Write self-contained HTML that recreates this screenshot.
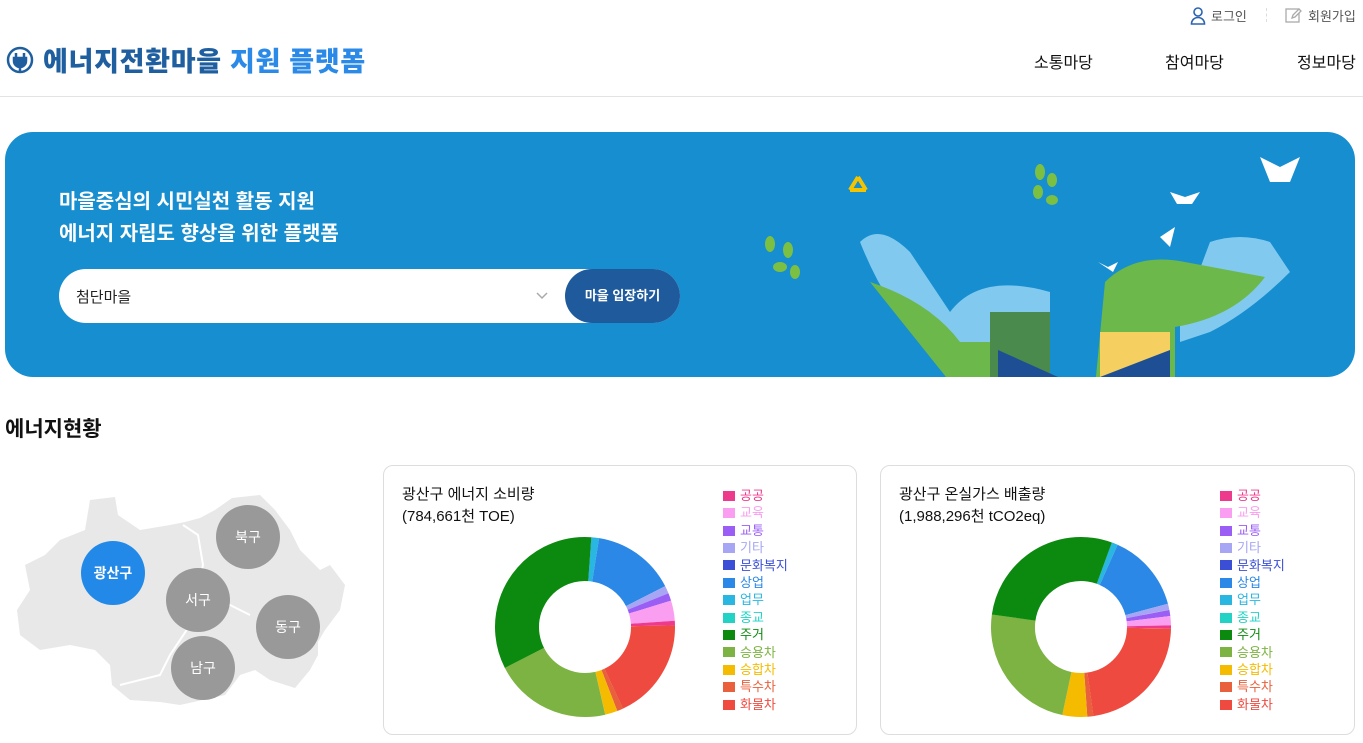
<!DOCTYPE html>
<html><head><meta charset="utf-8"><style>
*{margin:0;padding:0;box-sizing:border-box}
body{width:1363px;height:743px;overflow:hidden;background:#fff;font-family:"Liberation Sans","Noto Sans CJK KR",sans-serif;color:#111;position:relative}
.abs{position:absolute}
.top{top:6px;font-size:13px;color:#555}
.nav{top:49px;font-size:16px;color:#111}
.legend{position:absolute;left:0;top:0;font-size:13px;line-height:17.4px}
.legend div{display:flex;align-items:center;white-space:nowrap}
.legend i{display:inline-block;width:12px;height:10px;margin-right:5px}
.card{position:absolute;top:465px;height:270px;border:1px solid #ddd;border-radius:10px;background:#fff}
.card h3{position:absolute;left:18px;top:18px;font-size:15px;font-weight:normal;line-height:22px;color:#111}
</style></head><body>
<!-- header -->
<div class="abs top" style="left:1190px;display:flex;align-items:center;gap:5px">
<svg width="16" height="18" viewBox="0 0 16 18"><circle cx="8" cy="5" r="4" fill="none" stroke="#2a64b0" stroke-width="1.6"/><path d="M1.5 17c0-4 3-6.5 6.5-6.5s6.5 2.5 6.5 6.5z" fill="none" stroke="#2a64b0" stroke-width="1.6"/></svg>로그인</div>
<div class="abs" style="left:1266px;top:8px;width:1px;height:14px;border-left:1px dashed #ddd"></div>
<div class="abs top" style="left:1285px;display:flex;align-items:center;gap:6px">
<svg width="17" height="17" viewBox="0 0 17 17"><rect x="1" y="2" width="13" height="13" fill="none" stroke="#aaa" stroke-width="1.3"/><path d="M7 11l1-3 6-6 2 2-6 6z" fill="#fff" stroke="#aaa" stroke-width="1.3"/></svg>회원가입</div>
<div class="abs" style="left:6px;top:40px;display:flex;align-items:center">
<svg width="28" height="28" viewBox="0 0 28 28"><circle cx="14" cy="14" r="12" fill="none" stroke="#1f5fa0" stroke-width="2.5"/><path d="M10 7v5M18 7v5M8 12h12v3a6 6 0 0 1-12 0z M14 21v6" stroke="#1f5fa0" stroke-width="2.5" fill="#1f5fa0"/></svg>
<span style="margin-left:9px;font-size:27px;font-weight:900;color:#1f5fa0;letter-spacing:0.7px;white-space:nowrap">에너지전환마을 <span style="color:#2b8ae8">지원 플랫폼</span></span></div>
<div class="abs nav" style="left:1034px">소통마당</div>
<div class="abs nav" style="left:1165px">참여마당</div>
<div class="abs nav" style="left:1297px">정보마당</div>
<div class="abs" style="left:0;top:96px;width:1363px;height:1px;background:#e3e3e3"></div>

<!-- hero -->
<div class="abs" style="left:5px;top:132px;width:1350px;height:245px;border-radius:28px;background:#168ecf;overflow:hidden">
<div class="abs" style="left:54px;top:54px;color:#fff;font-size:20px;font-weight:bold;line-height:32px">마을중심의 시민실천 활동 지원<br>에너지 자립도 향상을 위한 플랫폼</div>
<div class="abs" style="left:54px;top:137px;width:621px;height:54px;border-radius:27px;background:#fff">
<span class="abs" style="left:17px;top:17px;font-size:15px;color:#222">첨단마을</span>
<svg class="abs" style="left:476px;top:22px" width="14" height="10" viewBox="0 0 14 10"><path d="M2 2l5 5 5-5" fill="none" stroke="#aaa" stroke-width="1.5"/></svg>
<div class="abs" style="right:0;top:0;width:115px;height:54px;border-radius:27px;background:#1f5a9c;color:#fff;font-size:13px;font-weight:bold;text-align:center;line-height:54px">마을 입장하기</div>
</div>
<svg class="abs" style="left:735px;top:0" width="615" height="245" viewBox="0 0 615 245">
<path d="M118 45l-8 13M118 45l8 13M110 58h16" stroke="#f5c400" stroke-width="4" fill="none"/>
<g fill="#7bc043"><ellipse cx="30" cy="112" rx="5" ry="8"/><ellipse cx="48" cy="118" rx="5" ry="8"/><ellipse cx="40" cy="135" rx="7" ry="5"/><ellipse cx="55" cy="140" rx="5" ry="7"/><ellipse cx="300" cy="40" rx="5" ry="8"/><ellipse cx="312" cy="48" rx="5" ry="7"/><ellipse cx="298" cy="60" rx="5" ry="7"/><ellipse cx="312" cy="68" rx="6" ry="5"/></g>
<g fill="#fff"><path d="M520 25l20 10 20-10-10 25-20 0z"/><path d="M430 60l15 5 15-5-8 12h-15z"/><path d="M420 105l15-10-5 20z"/><path d="M358 130l10 5 10-5-5 10z"/></g>
<path d="M120 110q20-20 50 10l40 60q30-40 100-20v120h-80l-10-50q-60-20-100-120z" fill="#82c9ef"/>
<path d="M130 150q60 20 90 60h80v65h-70z" fill="#6cb84a"/>
<path d="M250 180h60v65h-60z" fill="#4b8a4d"/>
<path d="M470 110q30-10 60 0l20 30q-40 40-80 60l-30 10v-20z" fill="#82c9ef"/>
<path d="M365 150q30-30 80-20l80 15q-30 40-90 50v60h-80z" fill="#6cb84a"/>
<path d="M360 200h70v45h-70z" fill="#f5d061"/>
<path d="M258 218l60 27h-60z" fill="#1e4f95"/><path d="M360 245l70-27v27z" fill="#1e4f95"/>
</svg>
</div>

<div class="abs" style="left:5px;top:413px;font-size:21px;font-weight:bold">에너지현황</div>

<!-- map -->
<svg class="abs" style="left:0;top:470px" width="370" height="260" viewBox="0 0 370 260">
<path d="M90 30L115 27L118 45L140 60L170 55L185 52L200 48L215 40L232 28L260 25L275 40L290 60L300 80L320 100L330 95L345 115L340 140L325 160L318 172L318 185L310 200L295 218L270 210L255 200L240 205L225 225L180 235L160 232L130 230L112 215L110 195L95 180L70 175L40 180L20 165L17 140L30 120L25 95L45 85L60 70L85 60Z" fill="#e8e8e8"/>
<path d="M183 55l15 10 5 30-5 25M200 120l20 10 30 15M190 155l-20 30-10 20-40 10" stroke="#fff" stroke-width="2" fill="none"/>
<g font-size="14" fill="#fff" text-anchor="middle" font-weight="bold">
<circle cx="113" cy="103" r="32" fill="#2289e8"/><text x="113" y="108">광산구</text>
<circle cx="248" cy="67" r="32" fill="#999"/><text x="248" y="72" font-weight="normal">북구</text>
<circle cx="198" cy="130" r="32" fill="#999"/><text x="198" y="135" font-weight="normal">서구</text>
<circle cx="288" cy="157" r="32" fill="#999"/><text x="288" y="162" font-weight="normal">동구</text>
<circle cx="203" cy="198" r="32" fill="#999"/><text x="203" y="203" font-weight="normal">남구</text>
</g></svg>

<!-- card 1 -->
<div class="card" style="left:383px;width:474px">
<h3>광산구 에너지 소비량<br>(784,661천 TOE)</h3>
<svg class="abs" style="left:0;top:0" width="474" height="270"><g transform="translate(201,161)" fill="none" stroke-width="44">
<circle r="68" stroke="#29b6e0" stroke-dasharray="5.93 500" transform="rotate(-86)"/>
<circle r="68" stroke="#2b88e6" stroke-dasharray="64.09 500" transform="rotate(-81)"/>
<circle r="68" stroke="#a6a6f5" stroke-dasharray="5.93 500" transform="rotate(-27)"/>
<circle r="68" stroke="#9b5ef5" stroke-dasharray="5.93 500" transform="rotate(-22)"/>
<circle r="68" stroke="#f99ef0" stroke-dasharray="15.43 500" transform="rotate(-17)"/>
<circle r="68" stroke="#ee3a8c" stroke-dasharray="3.56 500" transform="rotate(-4)"/>
<circle r="68" stroke="#ef4a3f" stroke-dasharray="78.33 500" transform="rotate(-1)"/>
<circle r="68" stroke="#e8603c" stroke-dasharray="4.75 500" transform="rotate(65)"/>
<circle r="68" stroke="#f5bb00" stroke-dasharray="9.49 500" transform="rotate(69)"/>
<circle r="68" stroke="#7cb342" stroke-dasharray="90.2 500" transform="rotate(77)"/>
<circle r="68" stroke="#0c8a0f" stroke-dasharray="143.6 500" transform="rotate(153)"/>
</g></svg>
<div class="legend" style="left:339px;top:21px">
<div style="color:#ee3a8c"><i style="background:#ee3a8c"></i>공공</div>
<div style="color:#f99ef0"><i style="background:#f99ef0"></i>교육</div>
<div style="color:#9b5ef5"><i style="background:#9b5ef5"></i>교통</div>
<div style="color:#a6a6f5"><i style="background:#a6a6f5"></i>기타</div>
<div style="color:#3a4fd6"><i style="background:#3a4fd6"></i>문화복지</div>
<div style="color:#2b88e6"><i style="background:#2b88e6"></i>상업</div>
<div style="color:#29b6e0"><i style="background:#29b6e0"></i>업무</div>
<div style="color:#22d3c5"><i style="background:#22d3c5"></i>종교</div>
<div style="color:#0c8a0f"><i style="background:#0c8a0f"></i>주거</div>
<div style="color:#7cb342"><i style="background:#7cb342"></i>승용차</div>
<div style="color:#f5bb00"><i style="background:#f5bb00"></i>승합차</div>
<div style="color:#e8603c"><i style="background:#e8603c"></i>특수차</div>
<div style="color:#ef4a3f"><i style="background:#ef4a3f"></i>화물차</div>
</div></div>

<!-- card 2 -->
<div class="card" style="left:880px;width:475px">
<h3>광산구 온실가스 배출량<br>(1,988,296천 tCO2eq)</h3>
<svg class="abs" style="left:0;top:0" width="475" height="270"><g transform="translate(200,161)" fill="none" stroke-width="44">
<circle r="68" stroke="#29b6e0" stroke-dasharray="4.75 500" transform="rotate(-70)"/>
<circle r="68" stroke="#2b88e6" stroke-dasharray="60.53 500" transform="rotate(-66)"/>
<circle r="68" stroke="#a6a6f5" stroke-dasharray="4.75 500" transform="rotate(-15)"/>
<circle r="68" stroke="#9b5ef5" stroke-dasharray="4.75 500" transform="rotate(-11)"/>
<circle r="68" stroke="#f99ef0" stroke-dasharray="7.12 500" transform="rotate(-7)"/>
<circle r="68" stroke="#ee3a8c" stroke-dasharray="2.37 500" transform="rotate(-1)"/>
<circle r="68" stroke="#ef4a3f" stroke-dasharray="96.13 500" transform="rotate(1)"/>
<circle r="68" stroke="#e8603c" stroke-dasharray="4.75 500" transform="rotate(82)"/>
<circle r="68" stroke="#f5bb00" stroke-dasharray="18.99 500" transform="rotate(86)"/>
<circle r="68" stroke="#7cb342" stroke-dasharray="102.07 500" transform="rotate(102)"/>
<circle r="68" stroke="#0c8a0f" stroke-dasharray="121.06 500" transform="rotate(188)"/>
</g></svg>
<div class="legend" style="left:339px;top:21px">
<div style="color:#ee3a8c"><i style="background:#ee3a8c"></i>공공</div>
<div style="color:#f99ef0"><i style="background:#f99ef0"></i>교육</div>
<div style="color:#9b5ef5"><i style="background:#9b5ef5"></i>교통</div>
<div style="color:#a6a6f5"><i style="background:#a6a6f5"></i>기타</div>
<div style="color:#3a4fd6"><i style="background:#3a4fd6"></i>문화복지</div>
<div style="color:#2b88e6"><i style="background:#2b88e6"></i>상업</div>
<div style="color:#29b6e0"><i style="background:#29b6e0"></i>업무</div>
<div style="color:#22d3c5"><i style="background:#22d3c5"></i>종교</div>
<div style="color:#0c8a0f"><i style="background:#0c8a0f"></i>주거</div>
<div style="color:#7cb342"><i style="background:#7cb342"></i>승용차</div>
<div style="color:#f5bb00"><i style="background:#f5bb00"></i>승합차</div>
<div style="color:#e8603c"><i style="background:#e8603c"></i>특수차</div>
<div style="color:#ef4a3f"><i style="background:#ef4a3f"></i>화물차</div>
</div></div>
</body></html>
